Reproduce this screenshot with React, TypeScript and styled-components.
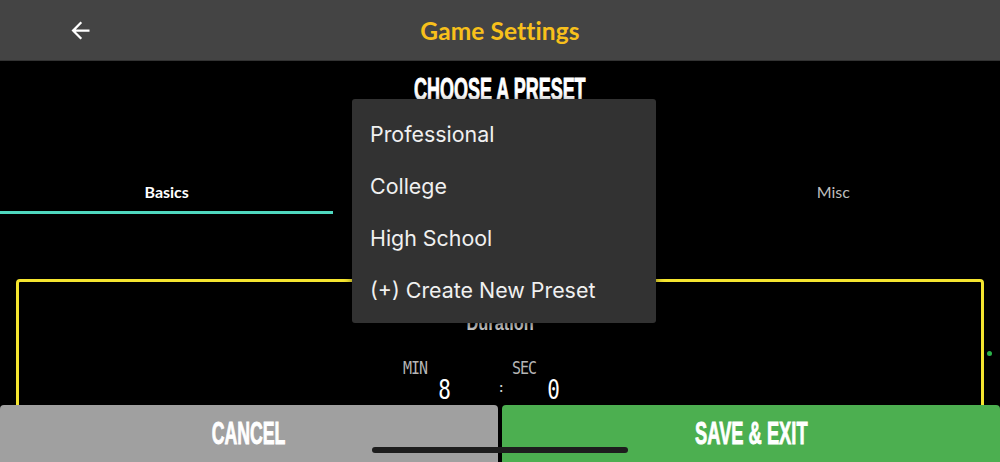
import React from "react";
import styled, { createGlobalStyle } from "styled-components";

const GlobalStyle = createGlobalStyle`
  html, body { margin: 0; padding: 0; background: #000; overflow: hidden; }
  #root { width: 1000px; height: 462px; }
  * { box-sizing: border-box; }
`;

const Page = styled.div`
  position: relative;
  width: 1000px;
  height: 462px;
  overflow: hidden;
  background: #000;
  display: flex;
  flex-direction: column;
  font-family: "Lato", "Liberation Sans", sans-serif;
`;

const Header = styled.header`
  height: 61px;
  flex: none;
  background: #444444;
  border-bottom: 1px solid #333333;
  display: grid;
  grid-template-columns: 1fr auto 1fr;
  align-items: center;
`;

const BackButton = styled.button`
  justify-self: start;
  margin-left: 67px;
  width: 27px;
  height: 27px;
  padding: 0;
  border: none;
  background: transparent;
  color: #ffffff;
  display: flex;
  align-items: center;
  justify-content: center;
  svg { display: block; }
`;

const Title = styled.h1`
  margin: 0;
  font-family: "Lato", "Liberation Sans", sans-serif;
  font-weight: 700;
  font-size: 24.5px;
  color: #f8c01b;
  letter-spacing: 0.1px;
`;

const PresetSection = styled.section`
  height: 110px;
  flex: none;
  padding-top: 13px;
  display: flex;
  justify-content: center;
  align-items: flex-start;
`;

const Condensed = styled.span<{ $size: number; $scale: number }>`
  display: inline-block;
  font-family: "Liberation Sans", Arial, sans-serif;
  font-weight: 700;
  font-size: ${(p) => p.$size}px;
  line-height: 1;
  color: #ffffff;
  transform: scaleX(${(p) => p.$scale});
  transform-origin: center;
  -webkit-text-stroke: 0.9px #ffffff;
  white-space: nowrap;
`;

const TabRow = styled.nav`
  flex: none;
  display: grid;
  grid-template-columns: repeat(3, 1fr);
`;

const Tab = styled.div<{ $active?: boolean }>`
  height: 43px;
  display: flex;
  align-items: center;
  justify-content: center;
  font-size: 16px;
  font-weight: ${(p) => (p.$active ? 700 : 400)};
  color: ${(p) => (p.$active ? "#ffffff" : "#bdbdbd")};
  border-bottom: 3px solid ${(p) => (p.$active ? "#4fd8bf" : "transparent")};
`;

const Card = styled.section`
  flex: none;
  margin: 65px 16px 0 16px;
  height: 300px;
  border: 3px solid #f5e52f;
  border-radius: 4px;
  padding-top: 31px;
  display: flex;
  flex-direction: column;
`;

const SectionLabel = styled.div`
  align-self: center;
  font-family: "Liberation Sans", Arial, sans-serif;
  font-weight: 700;
  font-size: 20px;
  line-height: 20px;
  color: #cfcfcf;
  transform: scaleX(0.82);
`;

const TimerRow = styled.div`
  margin-top: 27px;
  padding-left: 384px;
  display: flex;
  align-items: flex-start;
`;

const TimerCol = styled.div`
  width: 48px;
  display: flex;
  flex-direction: column;
`;

const UnitLabel = styled.span`
  align-self: flex-start;
  font-family: "DejaVu Sans Mono", "Liberation Mono", monospace;
  font-size: 15px;
  line-height: 14px;
  color: #b5b5b5;
  transform: scaleY(1.2);
  transform-origin: top;
  letter-spacing: -1px;
`;

const Digit = styled.span`
  align-self: flex-end;
  margin-top: 4px;
  font-family: "DejaVu Sans Mono", "Liberation Mono", monospace;
  font-size: 21px;
  line-height: 20px;
  color: #ffffff;
  transform: scaleY(1.25);
  transform-origin: top;
`;

const Colon = styled.span`
  margin: 20px 10px 0 46px;
  width: 5px;
  font-family: "DejaVu Sans Mono", "Liberation Mono", monospace;
  font-size: 14px;
  line-height: 14px;
  color: #d0d0d0;
`;

const Menu = styled.ul`
  position: absolute;
  left: 352px;
  top: 99px;
  width: 304px;
  height: 224px;
  margin: 0;
  padding: 9px 0 0 0;
  list-style: none;
  background: #323232;
  border-radius: 3px;
  box-shadow: 0 2px 8px rgba(0, 0, 0, 0.5);
`;

const MenuItem = styled.li`
  height: 52px;
  line-height: 52px;
  padding-left: 18px;
  font-family: "Inter", "Liberation Sans", sans-serif;
  font-size: 21.4px;
  color: #f0f0f0;
  white-space: nowrap;
`;

const ScrollDot = styled.span`
  position: absolute;
  left: 987px;
  top: 351px;
  width: 5px;
  height: 5px;
  border-radius: 50%;
  background: #2bb34a;
`;

const BottomBar = styled.footer`
  position: absolute;
  left: 0;
  right: 0;
  bottom: 0;
  height: 57px;
  display: grid;
  grid-template-columns: 498px 498px;
  column-gap: 4px;
`;

const ActionButton = styled.button<{ $bg: string }>`
  border: none;
  margin: 0;
  padding: 0;
  border-radius: 4px 4px 0 0;
  background: ${(p) => p.$bg};
  display: flex;
  align-items: center;
  justify-content: center;
  cursor: pointer;
`;

const HomeIndicator = styled.span`
  position: absolute;
  left: 372px;
  bottom: 9px;
  width: 256px;
  height: 6px;
  border-radius: 3px;
  background: #1d1d1d;
`;

const ArrowBack = () => (
  <svg width="27" height="27" viewBox="0 0 24 24" fill="currentColor">
    <path d="M20 11H7.83l5.59-5.59L12 4l-8 8 8 8 1.41-1.41L7.83 13H20v-2z" />
  </svg>
);

export default function App() {
  return (
    <>
      <GlobalStyle />
      <Page>
        <Header>
          <BackButton aria-label="Back">
            <ArrowBack />
          </BackButton>
          <Title>Game Settings</Title>
          <div />
        </Header>

        <PresetSection>
          <Condensed $size={31} $scale={0.58}>CHOOSE A PRESET</Condensed>
        </PresetSection>

        <TabRow>
          <Tab $active>Basics</Tab>
          <Tab>Advanced</Tab>
          <Tab>Misc</Tab>
        </TabRow>

        <Card>
          <SectionLabel>Duration</SectionLabel>
          <TimerRow>
            <TimerCol>
              <UnitLabel>MIN</UnitLabel>
              <Digit>8</Digit>
            </TimerCol>
            <Colon>:</Colon>
            <TimerCol>
              <UnitLabel>SEC</UnitLabel>
              <Digit>0</Digit>
            </TimerCol>
          </TimerRow>
        </Card>

        <ScrollDot />

        <Menu>
          <MenuItem>Professional</MenuItem>
          <MenuItem>College</MenuItem>
          <MenuItem>High School</MenuItem>
          <MenuItem>(+) Create New Preset</MenuItem>
        </Menu>

        <BottomBar>
          <ActionButton $bg="#a0a0a0">
            <Condensed $size={31} $scale={0.57}>CANCEL</Condensed>
          </ActionButton>
          <ActionButton $bg="#4caf50">
            <Condensed $size={31} $scale={0.59}>SAVE &amp; EXIT</Condensed>
          </ActionButton>
        </BottomBar>
        <HomeIndicator />
      </Page>
    </>
  );
}
